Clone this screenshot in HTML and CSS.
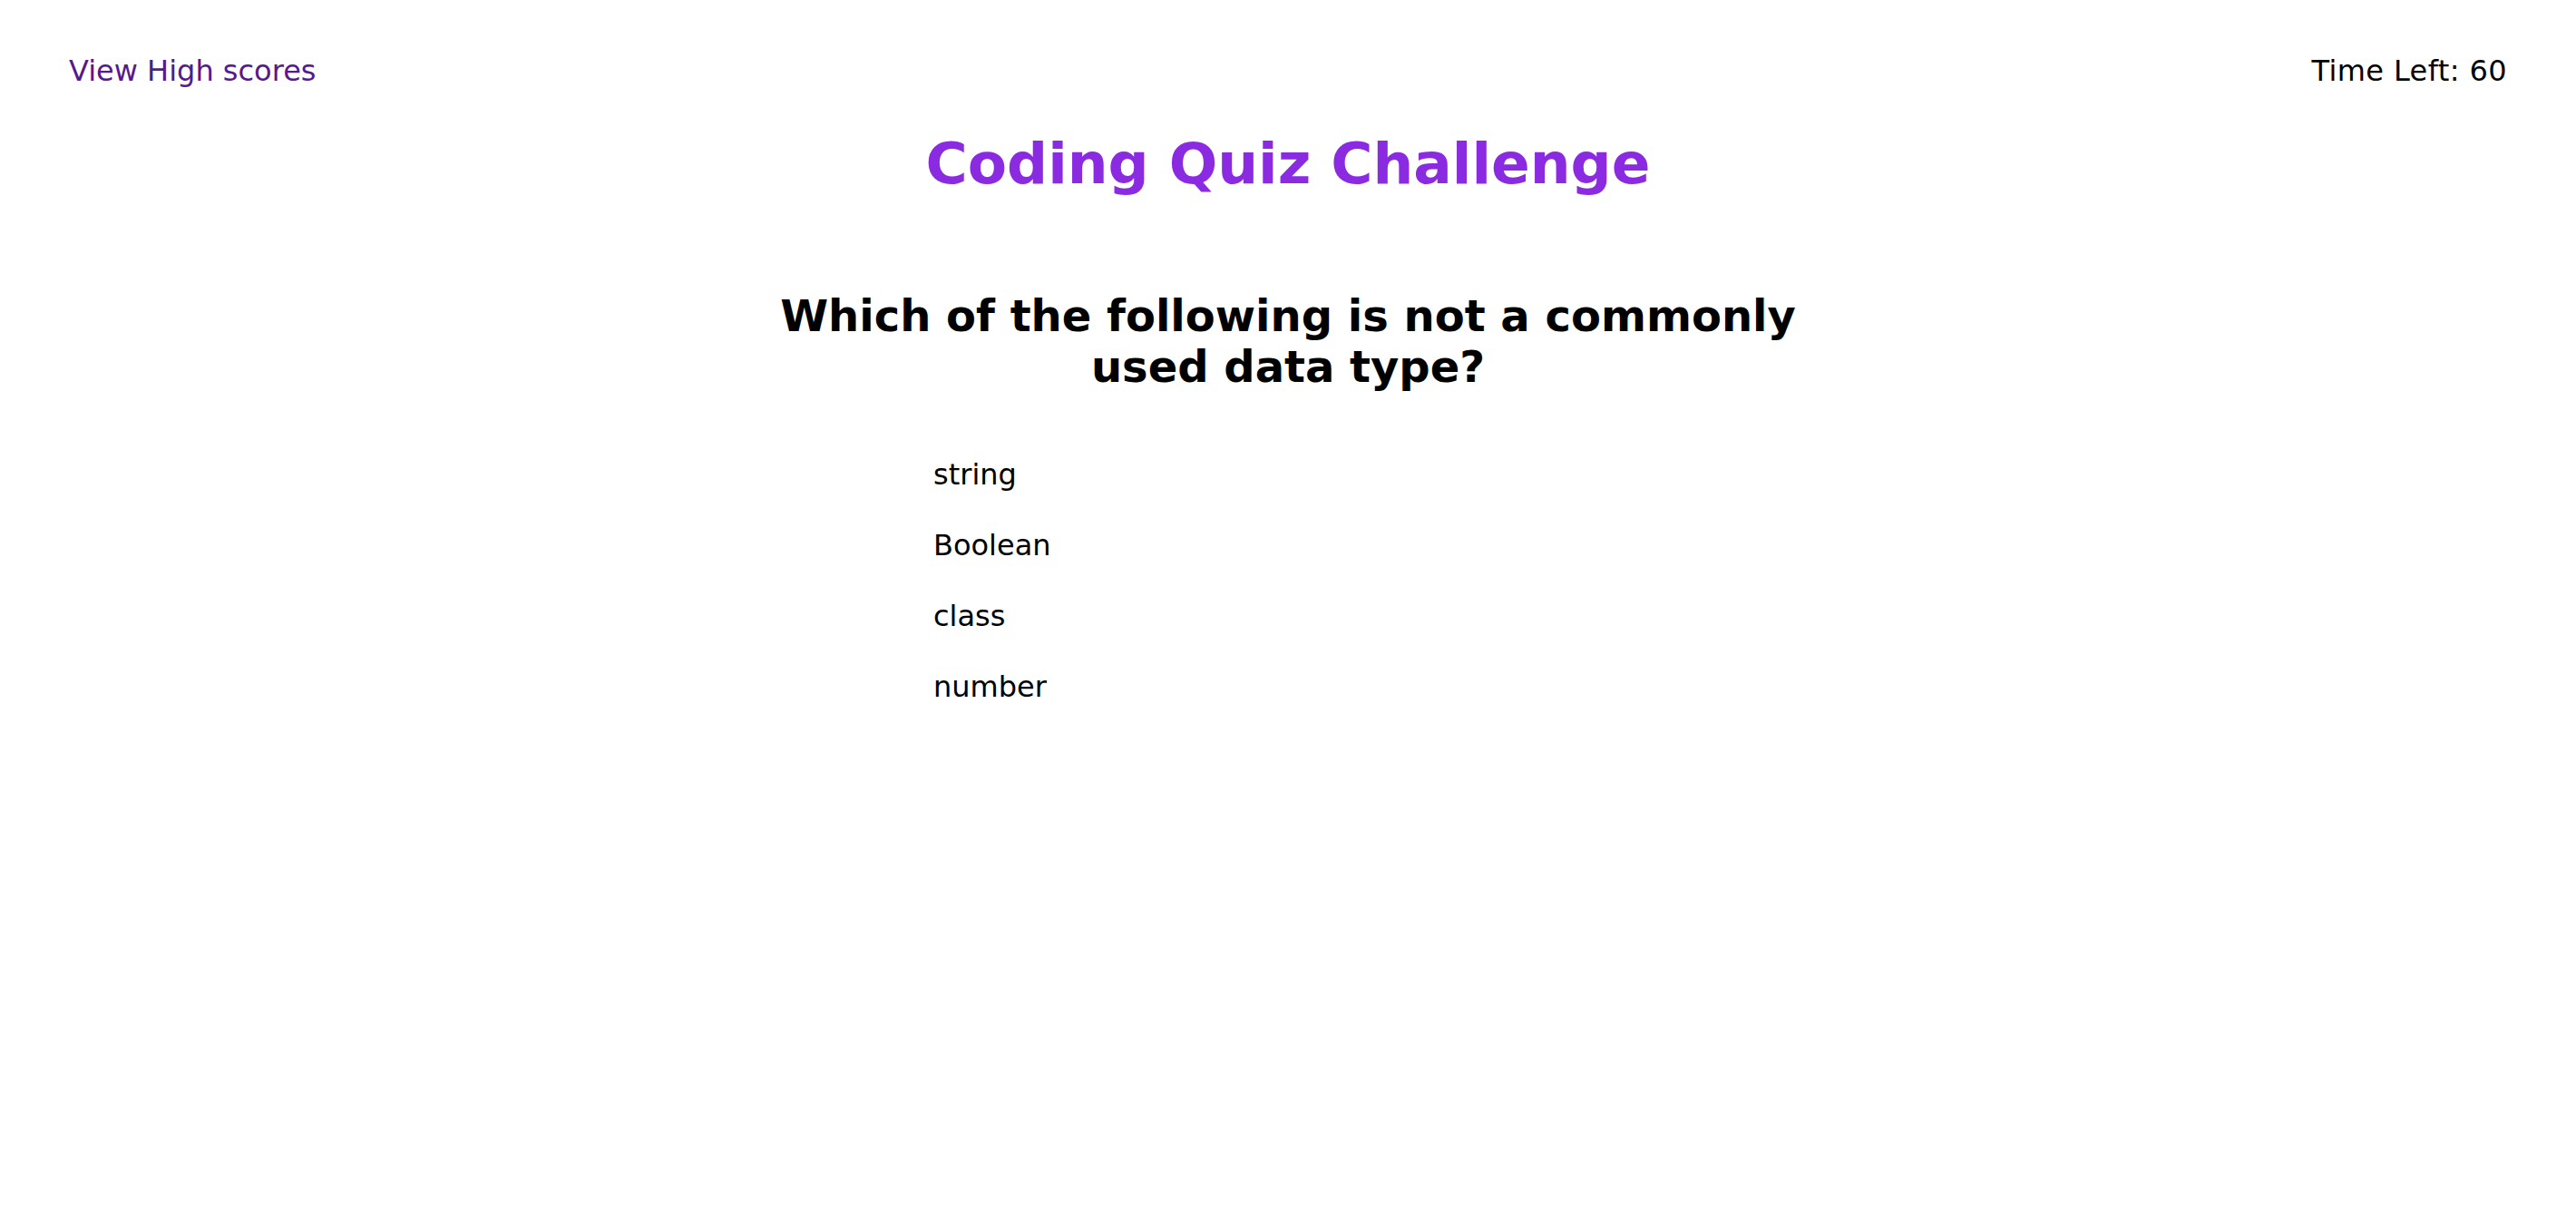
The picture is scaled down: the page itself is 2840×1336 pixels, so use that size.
FILE: index.html
```html
<!DOCTYPE html>
<html lang="en">
<head>
<meta charset="utf-8">
<title>Coding Quiz Challenge</title>
<link rel="stylesheet" href="styles.css">
</head>
<body>
<header class="top-bar">
  <a class="scores-link" href="#">View High scores</a>
  <div class="timer">Time Left: 60</div>
</header>
<main class="quiz">
  <h1 class="quiz-title">Coding Quiz Challenge</h1>
  <section class="question-card">
    <h2 class="question">Which of the following is not a commonly used data type?</h2>
    <ul class="answers">
      <li class="answer">string</li>
      <li class="answer">Boolean</li>
      <li class="answer">class</li>
      <li class="answer">number</li>
    </ul>
  </section>
</main>
</body>
</html>
```
FILE: styles.css
```css
html, body {
  margin: 0;
  padding: 0;
  background: #ffffff;
}

body {
  font-family: "DejaVu Sans", Verdana, sans-serif;
  color: #000000;
  font-size: 32px;
}

.top-bar {
  display: flex;
  justify-content: space-between;
  align-items: flex-start;
  padding: 59px 76px 0 76px;
  line-height: normal;
}

.scores-link {
  color: #551a8b;
  text-decoration: none;
}

.timer {
  color: #000000;
  letter-spacing: 0.4px;
}

.quiz {
  display: flex;
  flex-direction: column;
  align-items: center;
}

.quiz-title {
  margin: 47px 0 0 0;
  font-size: 63px;
  font-weight: bold;
  color: #8a2be2;
  line-height: normal;
  text-align: center;
}

.question-card {
  width: 1136px;
  margin-top: 103px;
}

.question {
  margin: 0;
  font-size: 48px;
  font-weight: bold;
  text-align: center;
  line-height: normal;
}

.answers {
  list-style: none;
  margin: 72px 0 0 0;
  padding: 0 0 0 177px;
  display: flex;
  flex-direction: column;
  gap: 40px;
}

.answer {
  line-height: 38px;
  font-size: 32px;
}
```
